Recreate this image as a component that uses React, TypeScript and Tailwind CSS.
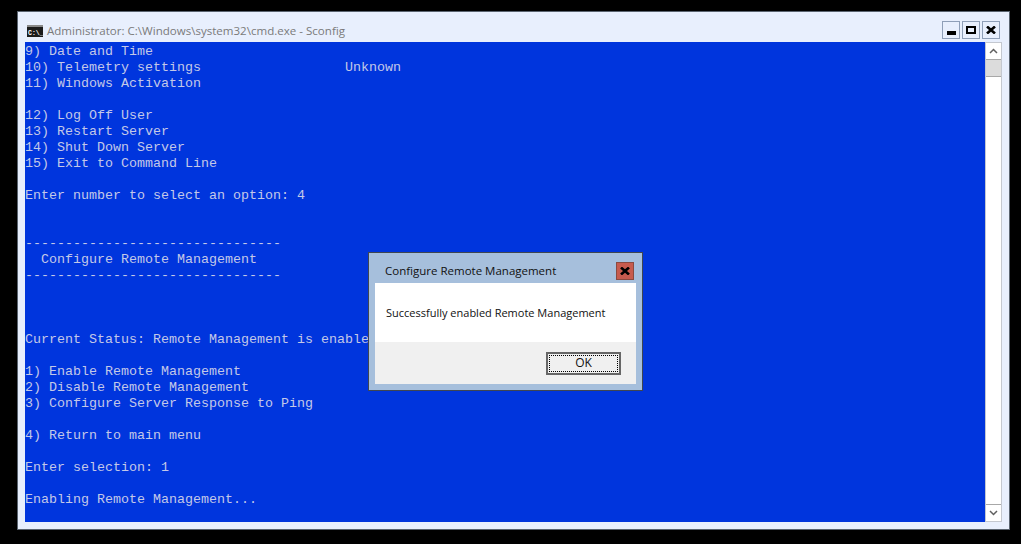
const lines = [
  "9) Date and Time",
  "10) Telemetry settings                  Unknown",
  "11) Windows Activation",
  "",
  "12) Log Off User",
  "13) Restart Server",
  "14) Shut Down Server",
  "15) Exit to Command Line",
  "",
  "Enter number to select an option: 4",
  "",
  "",
  "--------------------------------",
  "  Configure Remote Management",
  "--------------------------------",
  "",
  "",
  "",
  "Current Status: Remote Management is enabled",
  "",
  "1) Enable Remote Management",
  "2) Disable Remote Management",
  "3) Configure Server Response to Ping",
  "",
  "4) Return to main menu",
  "",
  "Enter selection: 1",
  "",
  "Enabling Remote Management...",
  "",
];

function CmdIcon() {
  return (
    <svg width="16" height="12" viewBox="0 0 16 12" className="shrink-0">
      <rect width="16" height="12" fill="#1c1c1c" />
      <rect x="0" y="0" width="16" height="2" fill="#8a8a8a" />
      <text x="1" y="9.5" fontSize="6.5" fontWeight="700" fill="#fff" fontFamily="'Liberation Mono', monospace">C:\_</text>
    </svg>
  );
}

function WinButton({ children }: { children: React.ReactNode }) {
  return (
    <div className="w-[18px] h-[18px] border border-[#8f9fb8] flex items-center justify-center">
      {children}
    </div>
  );
}

export default function App() {
  return (
    <div className="w-[1021px] h-[544px] bg-black pt-[11px] pl-[17px] overflow-hidden relative">
      <div className="w-[993px] h-[519px] bg-[#e8effd] border border-[#5a6470] flex flex-col px-[7px]">
        <div className="h-[30px] shrink-0 flex items-center justify-between pt-[6px] pr-[2px]">
          <div className="flex items-center gap-[4px] text-[11.55px] text-[#7a7a7a] font-['Open_Sans',sans-serif] ml-[2px] mt-[2px]">
            <CmdIcon />
            <span>Administrator: C:\Windows\system32\cmd.exe - Sconfig</span>
          </div>
          <div className="flex gap-[2px]">
            <WinButton><div className="w-[9px] h-[4px] bg-black mt-[6px]" /></WinButton>
            <WinButton><div className="w-[10px] h-[8px] border-[2.5px] border-black" /></WinButton>
            <WinButton>
              <svg width="10" height="8" viewBox="0 0 10 8"><path d="M1 0.5 L9 7.5 M9 0.5 L1 7.5" stroke="#000" strokeWidth="2.6" /></svg>
            </WinButton>
          </div>
        </div>
        <div className="flex h-[480px]">
          <div className="w-[960px] h-[480px] bg-[#0035dd] overflow-hidden pt-[2px] text-[#c4c8e8] text-[13.33px] leading-[16px] font-['Liberation_Mono',monospace]">
            {lines.map((l, i) => (
              <div key={i} className="h-4 whitespace-pre">{l}</div>
            ))}
          </div>
          <div className="w-[17px] h-[480px] bg-white border border-[#c4c8d0] flex flex-col">
            <div className="h-[16px] flex items-center justify-center">
              <svg width="9" height="6" viewBox="0 0 9 6"><path d="M1 5 L4.5 1.5 L8 5" fill="none" stroke="#606060" strokeWidth="1.5" /></svg>
            </div>
            <div className="h-[18px] bg-[#dcdcdc] border-y border-[#a8a8a8]" />
            <div className="flex-1" />
            <div className="h-[17px] flex items-center justify-center border-t border-[#a8a8a8]">
              <svg width="9" height="6" viewBox="0 0 9 6"><path d="M1 1 L4.5 4.5 L8 1" fill="none" stroke="#606060" strokeWidth="1.5" /></svg>
            </div>
          </div>
        </div>
      </div>

      <div className="absolute left-[368px] top-[252px] w-[275px] h-[139px] bg-[#a6bfdc] border border-[#3f4650] flex flex-col font-['Open_Sans',sans-serif]">
        <div className="h-[30px] shrink-0 flex items-center justify-between pt-[6px] pl-[16px] pr-[8px]">
          <span className="text-[11.5px] text-[#111]">Configure Remote Management</span>
          <div className="w-[18px] h-[18px] bg-[#c75b4e] border border-[#8c4a40] flex items-center justify-center">
            <svg width="10" height="8" viewBox="0 0 10 8"><path d="M1 0.5 L9 7.5 M9 0.5 L1 7.5" stroke="#000" strokeWidth="2.6" /></svg>
          </div>
        </div>
        <div className="mx-[6px] w-[261px] h-[59px] bg-white flex items-center pl-[11px] pt-[2px] text-[11px] text-[#111]">
          Successfully enabled Remote Management
        </div>
        <div className="mx-[6px] w-[261px] h-[42px] bg-[#f0f0f0] flex items-center justify-end pr-[15px] pt-[1px]">
          <div className="w-[75px] h-[23px] border-2 border-[#666] bg-[#f0f0f0] p-[1px]">
            <div className="w-full h-full border border-dotted border-black flex items-center justify-center pb-[2px] text-[12px] leading-[15px] text-[#111]">
              OK
            </div>
          </div>
        </div>
      </div>
    </div>
  );
}
